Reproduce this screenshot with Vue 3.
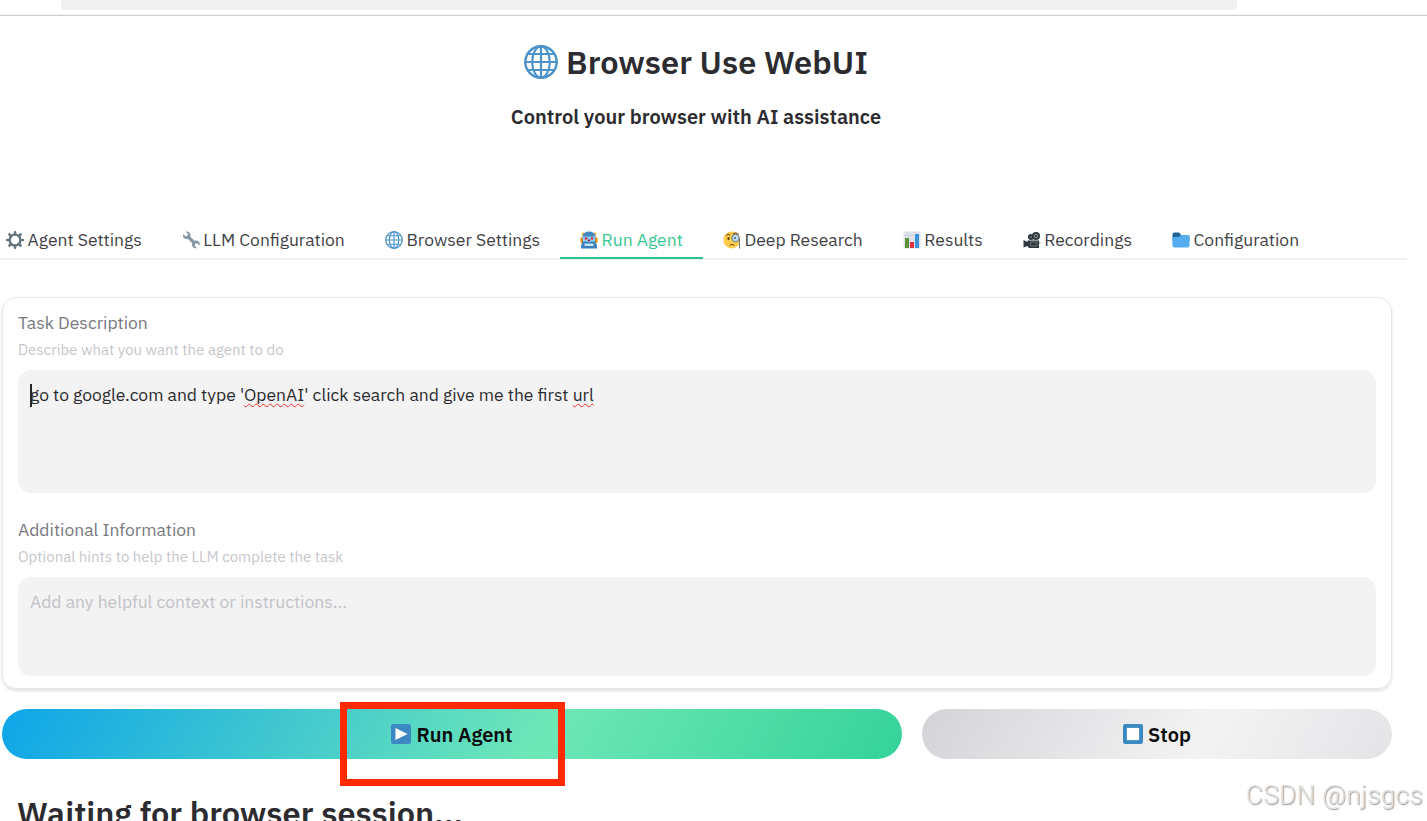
<template>
  <div class="page">
    <div class="browser-bar">
      <div class="address"></div>
    </div>

    <header class="header">
      <h1>
        <svg class="globe" viewBox="0 0 36 36"><use href="#icon-globe" /></svg>
        <span>Browser Use WebUI</span>
      </h1>
      <h3>Control your browser with AI assistance</h3>
    </header>

    <!-- Shared icon shapes -->
    <svg class="defs" width="0" height="0">
      <symbol id="icon-globe" viewBox="0 0 36 36">
        <circle cx="18" cy="18" r="17" fill="#fff" />
        <g fill="none" stroke="#4a93cb" stroke-width="2.3">
          <circle cx="18" cy="18" r="16.6" stroke-width="2.6" />
          <ellipse cx="18" cy="18" rx="9.3" ry="16.6" />
          <path d="M18 1v34M1 18h34M4.5 9.5h27M4.5 26.5h27" />
        </g>
      </symbol>
      <symbol id="icon-gear" viewBox="0 0 36 36">
        <circle cx="18" cy="18" r="10.8" fill="none" stroke="#66757f" stroke-width="4.6" />
        <g stroke="#66757f" stroke-width="5.2" stroke-linecap="round">
          <path d="M18 2.5v4M18 29.5v4M2.5 18h4M29.5 18h4M7 7l3 3M26 26l3 3M7 29l3-3M26 10l3-3" />
        </g>
      </symbol>
      <symbol id="icon-wrench" viewBox="0 0 36 36">
        <path
          fill="#8899a6"
          d="M10 1c4 0 7 3 7 7 0 1-.1 2-.5 2.800l9 9c1-.5 2-.8 3-.8 4 0 7 3 7 7 0 1-.2 2-.6 3l-4.500-4.500-4 1-1 4 4.500 4.500c-1 .5-2 .7-3 .7-4 0-7-3-7-7 0-1 .2-2 .6-3l-9-9c-.8.4-1.700.5-2.600.5-4 0-7-3-7-7 0-1 .2-2 .6-3L7 10.500l4-1 1-4L7.500 1.500C8.300 1.100 9.200 1 10 1z"
        />
      </symbol>
      <symbol id="icon-robot" viewBox="0 0 36 36">
        <path fill="#f4900c" d="M1 13h5v11H1zM30 13h5v11h-5z" />
        <ellipse cx="7" cy="6" rx="4" ry="3" fill="#ffac33" />
        <ellipse cx="29" cy="6" rx="4" ry="3" fill="#ffac33" />
        <path fill="#4289c1" d="M5 10Q8 1 18 1t13 9v14H5z" />
        <path fill="#8ccaf7" d="M6 11h24v10H6z" />
        <circle cx="12" cy="15" r="2.700" fill="#dd2e44" />
        <circle cx="24" cy="15" r="2.700" fill="#dd2e44" />
        <path fill="#3b82bd" d="M2 31q0-7 5-9h22q5 2 5 9v4H2z" />
        <path fill="#c5e3f7" d="M9 25h18v5H9z" />
        <path fill="#be1931" d="M16.500 17h3l1 3h-5z" />
      </symbol>
      <symbol id="icon-monocle" viewBox="0 0 36 36">
        <circle cx="17.500" cy="18" r="17" fill="#ffcc4d" />
        <path fill="none" stroke="#664500" stroke-width="2" stroke-linecap="round" d="M6 9q4-5 8-1M20 6q6-5 11 0M14 28q4-3 8 0" />
        <ellipse cx="11" cy="15" rx="2.300" ry="3" fill="#664500" />
        <circle cx="25" cy="14" r="7.500" fill="#bdddf4" stroke="#66757f" stroke-width="2" />
        <circle cx="24" cy="14" r="2.200" fill="#5b6876" />
        <path fill="none" stroke="#66757f" stroke-width="2" d="M33 15v20" />
      </symbol>
      <symbol id="icon-chart" viewBox="0 0 36 36">
        <rect x="1" y="1" width="34" height="34" rx="2" fill="#dfe5ea" />
        <path stroke="#b8c4cc" d="M1 9h34M1 18h34M1 27h34M10 1v34M26 1v34" />
        <path fill="#5c913b" d="M4 14h8v20H4z" />
        <path fill="#dd2e44" d="M14 22h8v12h-8z" />
        <path fill="#3b94d9" d="M24 6h8v28h-8z" />
      </symbol>
      <symbol id="icon-camera" viewBox="0 0 36 36">
        <path fill="#31373d" d="M1 18l8 4v-3h23v15H12l-3-4-8 3z" />
        <circle cx="16" cy="12" r="6" fill="#31373d" />
        <circle cx="26" cy="10" r="8" fill="#31373d" />
        <circle cx="26" cy="10" r="3.500" fill="none" stroke="#8899a6" stroke-width="2" />
        <circle cx="16" cy="12" r="2" fill="#66757f" />
        <path fill="none" stroke="#66757f" stroke-width="2" d="M15 22h13v8H15zM32 24h3" />
      </symbol>
      <symbol id="icon-folder" viewBox="0 0 36 36">
        <path fill="#226699" d="M1 7q0-4 4-4h8q3 0 4 3l1 2h13q4 0 4 4v8H1z" />
        <path fill="#55acee" d="M1 15q0-3 3-3h10l4-4h14q3 0 3 3v18q0 4-4 4H5q-4 0-4-4z" />
      </symbol>
    </svg>

    <nav class="tabs">
      <button v-for="tab in tabs" :key="tab.label" class="tab" :class="{ selected: tab.label === selected }" @click="selected = tab.label">
        <svg class="tab-icon"><use :href="'#icon-' + tab.icon" /></svg>
        <span>{{ tab.label }}</span>
      </button>
    </nav>

    <section class="form">
      <div class="field">
        <label>Task Description</label>
        <p class="info">Describe what you want the agent to do</p>
        <div class="textarea task">
          <span class="caret"></span>go to google.com and type '<span class="misspelled">OpenAI</span>' click search and give me the first <span class="misspelled">url</span>
        </div>
      </div>
      <div class="field">
        <label>Additional Information</label>
        <p class="info">Optional hints to help the LLM complete the task</p>
        <div class="textarea placeholder">Add any helpful context or instructions...</div>
      </div>
    </section>

    <div class="actions">
      <button class="btn run">
        <svg class="btn-icon" viewBox="0 0 36 36">
          <rect width="36" height="36" rx="4" fill="#3b88c3" />
          <path fill="#fff" d="M8 7l22 11L8 29z" />
        </svg>
        <span>Run Agent</span>
      </button>
      <button class="btn stop">
        <svg class="btn-icon" viewBox="0 0 36 36">
          <rect width="36" height="36" rx="4" fill="#3b88c3" />
          <rect x="7" y="7" width="22" height="22" fill="#fff" />
        </svg>
        <span>Stop</span>
      </button>
    </div>

    <h1 class="waiting">Waiting for browser session...</h1>

    <div class="highlight"></div>
    <div class="watermark">CSDN @njsgcs</div>
  </div>
</template>

<script setup>
import { ref } from "vue";

const selected = ref("Run Agent");

const tabs = [
  { label: "Agent Settings", icon: "gear" },
  { label: "LLM Configuration", icon: "wrench" },
  { label: "Browser Settings", icon: "globe" },
  { label: "Run Agent", icon: "robot" },
  { label: "Deep Research", icon: "monocle" },
  { label: "Results", icon: "chart" },
  { label: "Recordings", icon: "camera" },
  { label: "Configuration", icon: "folder" },
];
</script>

<style>
body {
  background: #fff;
  overflow: hidden;
}
</style>

<style scoped>
.page {
  position: relative;
  width: 1427px;
  height: 821px;
  overflow: hidden;
  font-family: "IBM Plex Sans", "Noto Sans", sans-serif;
  font-size: 17.5px;
  color: #2c2c30;
}

.browser-bar {
  height: 16px;
  box-sizing: border-box;
  border-bottom: 1px solid #d0d0d0;
  box-shadow: 0 -1px 0 #f0f0f0 inset;
}

.address {
  width: 1176px;
  height: 10px;
  margin-left: 61px;
  border-radius: 0 0 4px 4px;
  background: #f1f1f1;
}

.header {
  width: 1392px;
  height: 205px;
  text-align: center;
}

h1 {
  display: flex;
  justify-content: center;
  align-items: center;
  gap: 8px;
  margin: 0;
  padding-top: 25px;
  font-size: 32.5px;
  font-weight: 600;
  line-height: 42px;
}

.globe {
  width: 34px;
  height: 34px;
  margin-top: -1px;
}

h3 {
  margin: 20px 0 0;
  font-size: 20px;
  font-weight: 600;
  line-height: 28px;
}

.defs {
  position: absolute;
}

.tabs {
  display: flex;
  width: 1421px;
  height: 39px;
  box-sizing: border-box;
  margin-left: -14px;
  border-bottom: 2px solid #f0f0f1;
}

.tab {
  display: flex;
  align-items: center;
  gap: 3.6px;
  height: 38px;
  padding: 1px 20px 0;
  box-sizing: border-box;
  border: 0;
  border-bottom: 2px solid transparent;
  background: none;
  font: inherit;
  color: #3f3f46;
  white-space: nowrap;
}

.tab.selected {
  border-bottom-color: #2ac58d;
  color: #34c892;
}

.tab-icon {
  width: 18px;
  height: 18px;
}

.form {
  width: 1390px;
  height: 392px;
  margin: 37px 0 0 2px;
  padding: 12px 15px 0;
  box-sizing: border-box;
  border: 1px solid #e6e6e8;
  border-radius: 14px;
  box-shadow: 0 2px 3px rgba(0, 0, 0, 0.12);
}

.field {
  margin-bottom: 24px;
}

label {
  display: block;
  line-height: 26px;
  color: #78787f;
}

.info {
  margin: 3px 0 9px;
  font-size: 15px;
  line-height: 22px;
  color: #c6c6cb;
}

.textarea {
  height: 99px;
  padding: 12px;
  box-sizing: border-box;
  border-radius: 13px;
  background: #f3f3f3;
  line-height: 26px;
}

.task {
  height: 123px;
}

.placeholder {
  color: #c2c2c8;
}

.caret {
  display: inline-block;
  width: 2px;
  height: 23px;
  margin-right: -2px;
  background: #27272a;
  vertical-align: -6px;
}

.misspelled {
  text-decoration: underline wavy #f2302c 1.3px;
  text-underline-offset: 2px;
  text-decoration-skip-ink: none;
}

.actions {
  display: flex;
  gap: 20px;
  margin: 20px 0 0 2px;
}

.btn {
  display: flex;
  justify-content: center;
  align-items: center;
  gap: 5px;
  width: 900px;
  height: 50px;
  padding: 0;
  border: 0;
  border-radius: 25px;
  background: linear-gradient(120deg, #0ea5e9 0%, #6ee7b7 60%, #34d399 100%);
  font: inherit;
  font-size: 20px;
  font-weight: 600;
  color: #0b0b0d;
}

.stop {
  width: 470px;
  background: linear-gradient(120deg, #d4d4d8 0%, #f3f3f4 60%, #e4e4e7 100%);
}

.btn-icon {
  width: 20px;
  height: 20px;
}

.waiting {
  justify-content: flex-start;
  padding: 33px 0 0 17px;
}

.highlight {
  position: absolute;
  left: 340px;
  top: 702px;
  width: 225px;
  height: 83.5px;
  box-sizing: border-box;
  border: 7px solid #ff2a00;
}

.watermark {
  position: absolute;
  right: 4px;
  bottom: 7px;
  font-family: Roboto, sans-serif;
  font-size: 26px;
  font-weight: 300;
  line-height: 38px;
  letter-spacing: 0.4px;
  color: #e2e2e2;
  text-shadow: 1px 1px 1px #999;
}
</style>
